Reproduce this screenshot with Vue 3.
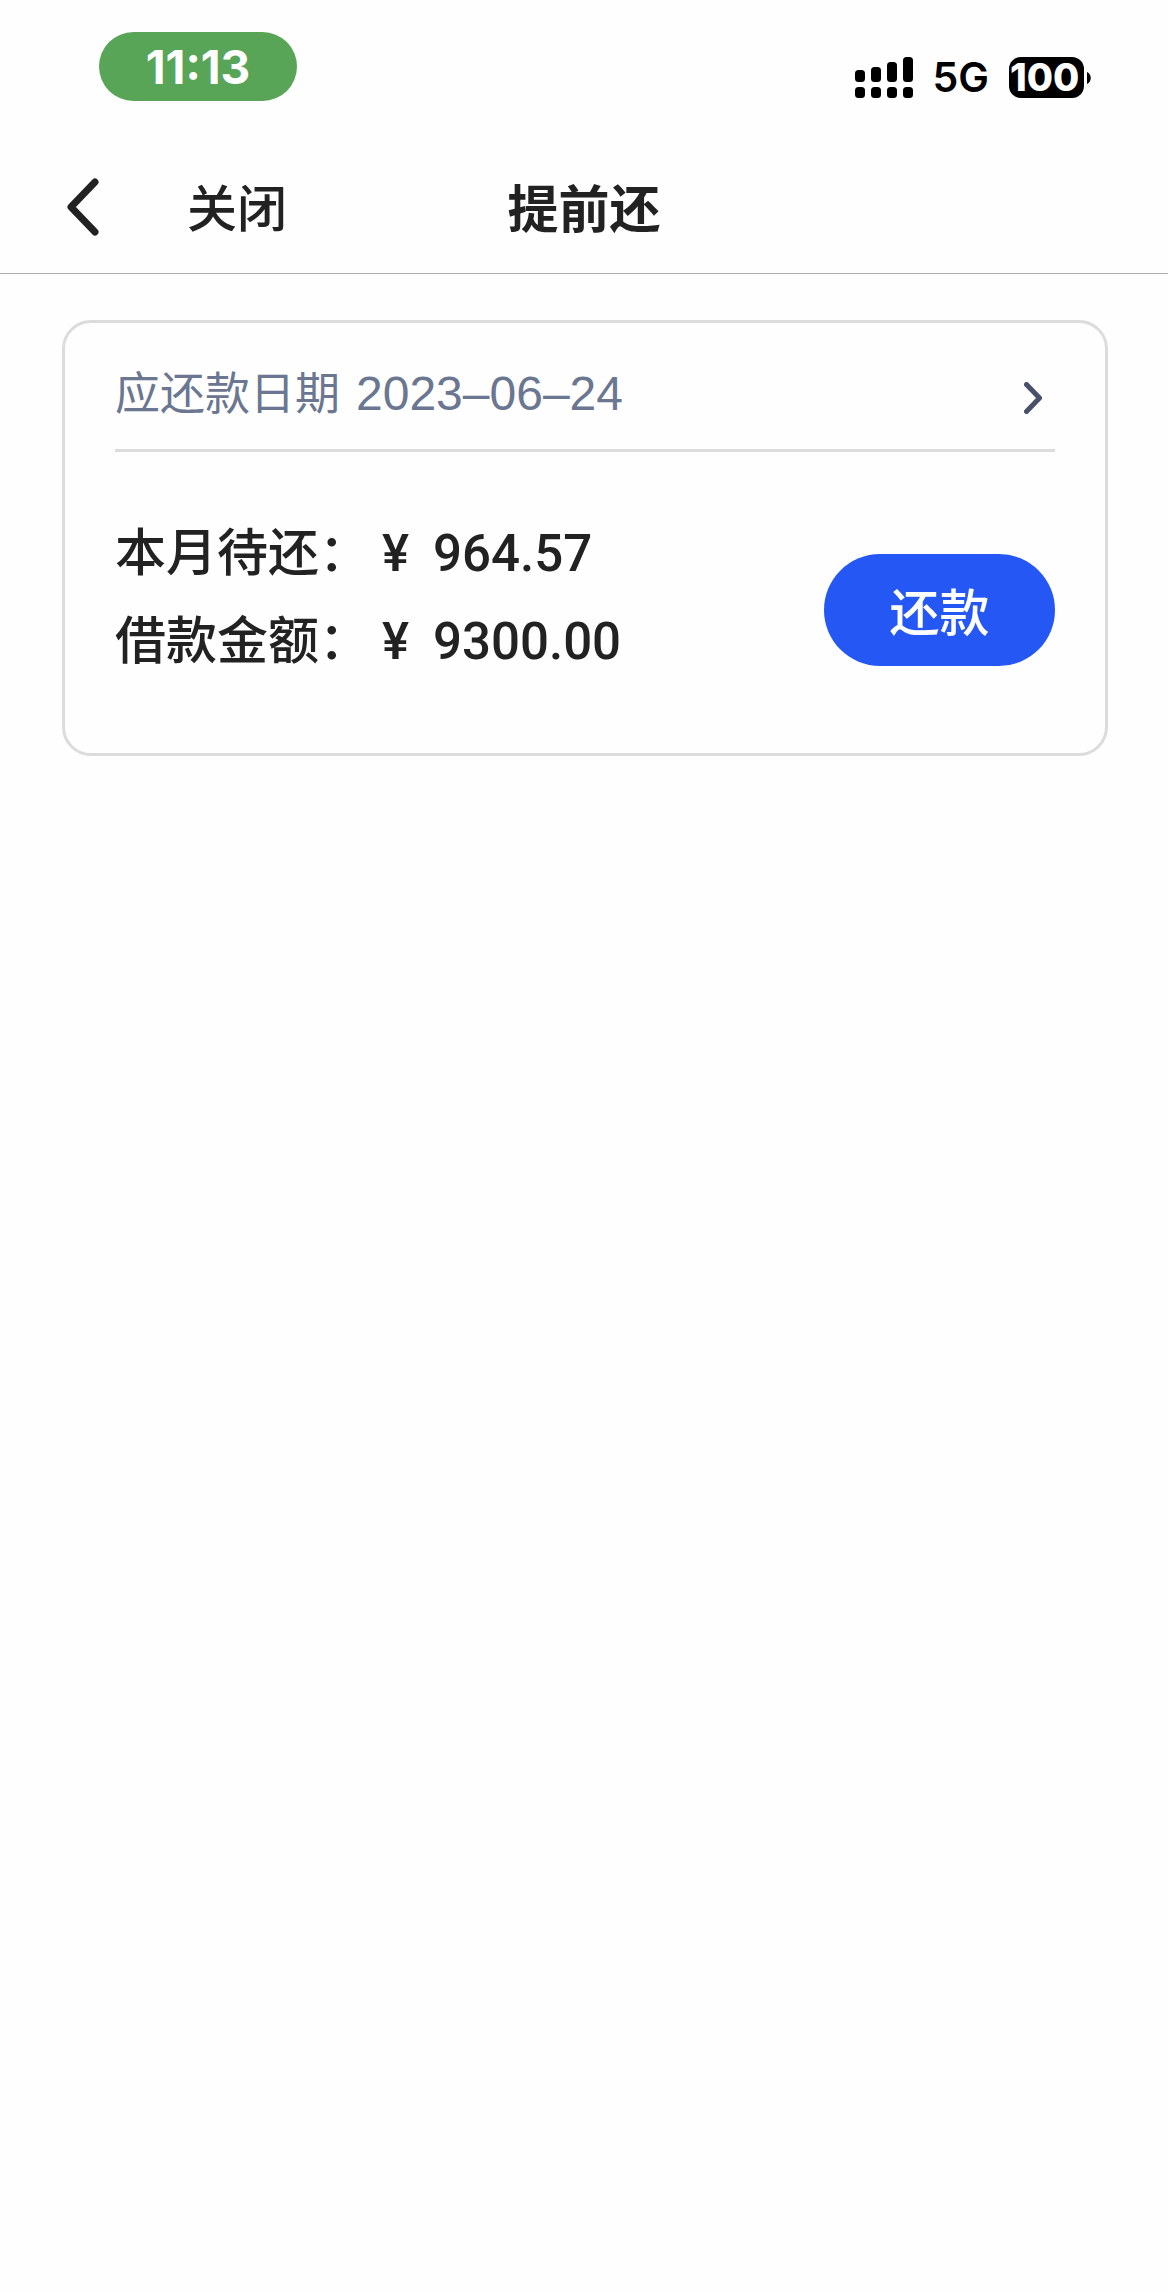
<script setup>
const loan = {
  dueDate: '2023–06–24',
  rows: [
    { label: '本月待还：', amount: '964.57' },
    { label: '借款金额：', amount: '9300.00' },
  ],
}
const bars = [
  { x: 0, y: 13, h: 12 },
  { x: 16, y: 10, h: 15 },
  { x: 32, y: 5, h: 20 },
  { x: 48, y: 0, h: 25 },
]
</script>

<template>
  <div class="page">
    <div class="status">
      <time class="clock">11:13</time>
      <div class="indicators">
        <svg class="signal" viewBox="0 0 58 41" aria-hidden="true">
          <g v-for="bar in bars" :key="bar.x">
            <rect :x="bar.x" :y="bar.y" width="10" :height="bar.h" rx="3.5" />
            <rect :x="bar.x" y="30" width="10" height="11" rx="3.5" />
          </g>
        </svg>
        <span class="network">5G</span>
        <span class="battery">
          <span class="level">100</span>
          <svg class="nub" viewBox="0 0 4 12" aria-hidden="true"><path d="M0 0C5 2 5 10 0 12Z" /></svg>
        </span>
      </div>
    </div>

    <header class="nav">
      <div class="nav-left">
        <button class="back" type="button" aria-label="返回">
          <svg viewBox="0 0 32 58" aria-hidden="true"><path d="M28 4L4 29L28 54" /></svg>
        </button>
        <button class="close" type="button">关闭</button>
      </div>
      <h1>提前还</h1>
    </header>

    <main>
      <section class="card">
        <a class="due" href="#">
          <span class="due-text">应还款日期<span class="date">{{ loan.dueDate }}</span></span>
          <svg viewBox="0 0 18 32" aria-hidden="true"><path d="M2.500 2.500L15.500 16L2.500 29.500" /></svg>
        </a>
        <div class="body">
          <dl>
            <div v-for="row in loan.rows" :key="row.label" class="row">
              <dt>{{ row.label }}</dt>
              <dd><span class="yen">¥</span>{{ row.amount }}</dd>
            </div>
          </dl>
          <button class="pay" type="button">还款</button>
        </div>
      </section>
    </main>
  </div>
</template>

<style>
body {
  margin: 0;
  background: #fefefe;
}
</style>

<style scoped>
.page {
  min-height: 100vh;
  background: #fefefe;
  color: #222;
  font-family: "Noto Sans CJK SC", sans-serif;
}
button {
  padding: 0;
  border: 0;
  background: none;
  color: inherit;
  font-family: inherit;
  cursor: pointer;
}
svg {
  display: block;
}
.status {
  display: flex;
  justify-content: space-between;
  align-items: flex-start;
  height: 100px;
  padding: 32px 77px 8px 99px;
  font-family: Inter, sans-serif;
}
.clock {
  width: 198px;
  height: 69px;
  border-radius: 35px;
  background: #58a558;
  color: #fff;
  font-size: 46px;
  font-weight: 700;
  line-height: 70px;
  text-align: center;
}
.indicators {
  display: flex;
  align-items: center;
  height: 41px;
  margin-top: 25px;
  color: #000;
}
.signal {
  width: 58px;
  height: 41px;
}
.network {
  margin: 0 20px;
  font-size: 41px;
  font-weight: 600;
  line-height: 43px;
}
.battery {
  display: flex;
  align-items: center;
  gap: 3px;
}
.level {
  box-sizing: border-box;
  width: 75px;
  height: 41px;
  padding-left: 1px;
  border-radius: 12px;
  background: #000;
  color: #fff;
  font-size: 38px;
  font-weight: 800;
  line-height: 41px;
}
.nub {
  width: 4px;
  height: 12px;
}
.nav {
  display: grid;
  grid-template-columns: 1fr auto 1fr;
  align-items: center;
  height: 133px;
  padding: 0 67px;
  border-bottom: 1px solid #aaa;
}
.nav-left {
  display: flex;
  align-items: center;
  gap: 88px;
}
.back svg {
  width: 32px;
  height: 58px;
}
.back path,
.due path {
  fill: none;
  stroke: #222;
  stroke-width: 7;
  stroke-linecap: round;
  stroke-linejoin: round;
}
.close {
  padding-bottom: 4px;
  font-size: 50px;
  font-weight: 500;
  line-height: 72px;
}
h1 {
  margin: 0;
  padding-bottom: 2px;
  font-size: 51px;
  font-weight: 700;
  line-height: 72px;
}
main {
  padding: 46px 60px 0 62px;
}
.card {
  padding: 0 50px 72px;
  border: 3px solid #dcdcdc;
  border-radius: 29px;
}
.due {
  display: flex;
  align-items: center;
  justify-content: space-between;
  height: 114px;
  padding: 12px 13px 0 0;
  border-bottom: 3px solid #dcdcdc;
  color: #6b7690;
  text-decoration: none;
}
.due-text {
  display: flex;
  align-items: baseline;
  gap: 16px;
  font-size: 45px;
  line-height: 66px;
}
.due svg {
  width: 18px;
  height: 32px;
  margin-top: 12px;
}
.due path {
  stroke: #48506b;
  stroke-width: 5;
}
.date {
  font-family: "Liberation Sans", sans-serif;
  font-size: 48px;
}
.body {
  display: flex;
  align-items: flex-start;
  justify-content: space-between;
  padding-top: 53px;
}
dl {
  margin: 0;
}
.row {
  display: flex;
  align-items: baseline;
  height: 88px;
  font-size: 51px;
  font-weight: 500;
  line-height: 88px;
}
dd {
  display: flex;
  margin: 0 0 0 12px;
  font-family: Roboto, sans-serif;
}
.yen {
  width: 51px;
}
.pay {
  width: 231px;
  height: 112px;
  margin-top: 49px;
  padding-bottom: 2px;
  border-radius: 56px;
  background: #2557f5;
  color: #fff;
  font-size: 50px;
  font-weight: 500;
}
</style>
